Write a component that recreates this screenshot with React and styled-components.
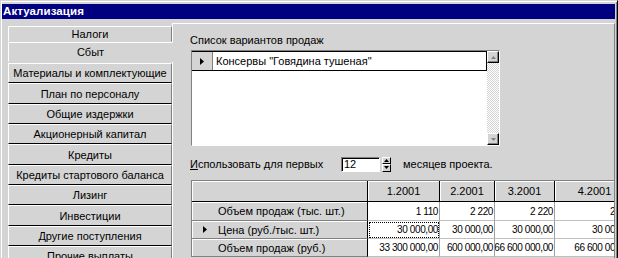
import React from 'react';
import styled, { createGlobalStyle } from 'styled-components';

const GRAY = '#d4d4d4';

const Global = createGlobalStyle`
  html, body { margin: 0; padding: 0; background: ${GRAY}; overflow: hidden; }
  body { font-family: "Liberation Sans", Arial, sans-serif; font-size: 11px; color: #000; }
`;

const Window = styled.div`
  width: 618px;
  height: 258px;
  box-sizing: border-box;
  background: ${GRAY};
  border-top: 1px solid ${GRAY};
  border-left: 1px solid ${GRAY};
  border-right: 1px solid #000;
  box-shadow: inset 1px 1px 0 #fff, inset -1px 0 0 #808080;
  padding: 3px 2px 0 1px;
  display: flex;
  flex-direction: column;
  overflow: hidden;
`;

const TitleBar = styled.div`
  height: 15px;
  background: #000080;
  color: #fff;
  font-weight: bold;
  font-size: 11.5px;
  line-height: 15px;
  padding-left: 1px;
  letter-spacing: 0.1px;
`;

const Body = styled.div`
  flex: 1;
  display: flex;
  margin-top: 4px;
  min-height: 0;
`;

const TabColumn = styled.div`
  width: 164px;
  margin-left: 6px;
  padding-top: 3px;
  display: flex;
  flex-direction: column;
  position: relative;
  z-index: 1;
`;

const Tab = styled.div`
  height: ${p => p.$h}px;
  flex: none;
  box-sizing: border-box;
  border-top: 1px solid #fff;
  border-left: 1px solid #fff;
  border-bottom: 1px solid ${p => (p.$flat ? GRAY : '#000')};
  border-right: 1px solid ${p => (p.$active ? GRAY : '#808080')};
  margin-right: ${p => (p.$active ? '-1px' : '0')};
  margin-top: ${p => p.$gap || 0}px;
  display: flex;
  align-items: center;
  justify-content: center;
  white-space: nowrap;
  background: ${GRAY};
`;

const Page = styled.div`
  flex: 1;
  box-sizing: border-box;
  border-top: 1px solid #fff;
  border-left: 1px solid #fff;
  border-right: 1px solid #808080;
  padding: 10px 0 0 18px;
  display: flex;
  flex-direction: column;
  overflow: hidden;
  min-width: 0;
`;

const Label = styled.div`
  height: 13px;
  line-height: 13px;
  margin-left: -1px;
  white-space: nowrap;
`;

const ListBox = styled.div`
  margin-top: 3px;
  width: 309px;
  height: 96px;
  box-sizing: border-box;
  background: #fff;
  border-top: 1px solid #808080;
  border-left: 1px solid #808080;
  border-bottom: 1px solid #fff;
  border-right: 1px solid #fff;
  display: flex;
`;

const ListRows = styled.div`
  flex: 1;
  display: flex;
  flex-direction: column;
`;

const ListRow = styled.div`
  height: 20px;
  box-sizing: border-box;
  border: 1px solid #000;
  border-left: none;
  display: flex;
  align-items: center;
`;

const Indicator = styled.div`
  width: 21px;
  height: 100%;
  box-sizing: border-box;
  background: ${GRAY};
  border-right: 1px solid #808080;
  display: flex;
  align-items: center;
  justify-content: center;
`;

const RowText = styled.div`
  padding-left: 3px;
  white-space: nowrap;
`;

const ScrollBar = styled.div`
  width: 12px;
  display: flex;
  flex-direction: column;
  background: repeating-conic-gradient(#fff 0 25%, ${GRAY} 0 50%) 0 0 / 2px 2px;
`;

const ScrollBtn = styled.div`
  width: 12px;
  height: 12px;
  box-sizing: border-box;
  background: ${GRAY};
  border-top: 1px solid #fff;
  border-left: 1px solid #fff;
  border-right: 1px solid #000;
  border-bottom: 1px solid #000;
  box-shadow: inset -1px -1px 0 #808080;
  display: flex;
  align-items: center;
  justify-content: center;
`;

const Track = styled.div`
  flex: 1;
`;

const SpinRow = styled.div`
  margin-top: 10px;
  height: 16px;
  display: flex;
  align-items: center;
  white-space: nowrap;
`;

const SpinLabel = styled.div`
  width: 151px;
  margin-left: -1px;
  u { text-decoration: underline; }
`;

const SpinInput = styled.div`
  width: 39px;
  height: 15px;
  box-sizing: border-box;
  background: #fff;
  border-top: 1px solid #808080;
  border-left: 1px solid #808080;
  border-right: 1px solid #fff;
  border-bottom: 1px solid #fff;
  box-shadow: inset 1px 1px 0 #000;
  padding-left: 2px;
  line-height: 13px;
`;

const Spinner = styled.div`
  margin-left: 2px;
  width: 9px;
  height: 15px;
  display: flex;
  flex-direction: column;
`;

const SpinBtn = styled.div`
  flex: 1;
  box-sizing: border-box;
  background: ${GRAY};
  border-top: 1px solid #fff;
  border-left: 1px solid #fff;
  border-right: 1px solid #000;
  border-bottom: 1px solid #000;
  display: flex;
  align-items: center;
  justify-content: center;
`;

const SpinTail = styled.div`
  margin-left: 12px;
`;

const Grid = styled.div`
  margin-top: 8px;
  display: grid;
  grid-template-columns: 176px 72px 55px 60px 80px;
  grid-template-rows: 21px 19px 18px 18px;
  border-top: 1px solid #808080;
  border-left: 1px solid #808080;
  width: max-content;
`;

const HeadCell = styled.div`
  box-sizing: border-box;
  background: ${GRAY};
  border-right: 1px solid #000;
  border-bottom: 1px solid #000;
  box-shadow: inset 1px 1px 0 #fff;
  display: flex;
  align-items: center;
  justify-content: center;
  white-space: nowrap;
`;

const RowHead = styled.div`
  box-sizing: border-box;
  background: ${GRAY};
  border-right: 1px solid #000;
  border-bottom: 1px solid #808080;
  box-shadow: inset 1px 1px 0 #fff;
  display: flex;
  align-items: center;
  white-space: nowrap;
`;

const RowMark = styled.div`
  width: 26px;
  display: flex;
  align-items: center;
  justify-content: center;
`;

const DataCell = styled.div`
  box-sizing: border-box;
  background: #fff;
  border-right: 1px solid #a0a0a0;
  border-bottom: 1px solid #c0c0c0;
  display: flex;
  align-items: center;
  justify-content: flex-end;
  padding-right: 1px;
  font-size: 10px;
  letter-spacing: -0.4px;
  white-space: nowrap;
  overflow: hidden;
  outline: ${p => (p.$focus ? '1px dotted #000' : 'none')};
  outline-offset: -2px;
`;

const Arrow = ({ dir = 'right', color = '#000', size = 4 }) => {
  if (dir === 'right') {
    return (
      <svg width={size} height={size * 2 - 1} viewBox={`0 0 ${size} ${size * 2 - 1}`}>
        <polygon points={`0,0 ${size},${size - 0.5} 0,${size * 2 - 1}`} fill={color} />
      </svg>
    );
  }
  const pts = dir === 'up' ? '0,3 2.5,0 5,3' : '0,0 2.5,3 5,0';
  return (
    <svg width="5" height="3" viewBox="0 0 5 3" style={{ overflow: 'visible' }}>
      <polygon points={pts} fill={color} />
    </svg>
  );
};

const tabs = [
  'Материалы и комплектующие',
  'План по персоналу',
  'Общие издержки',
  'Акционерный капитал',
  'Кредиты',
  'Кредиты стартового баланса',
  'Лизинг',
  'Инвестиции',
  'Другие поступления',
  'Прочие выплаты',
];
const heights = [20, 21, 20, 20, 21, 20, 20, 21, 20, 20];

const months = ['1.2001', '2.2001', '3.2001', '4.2001'];
const rows = [
  { name: 'Объем продаж (тыс. шт.)', vals: ['1 110', '2 220', '2 220', '2 220'] },
  { name: 'Цена (руб./тыс. шт.)', vals: ['30 000,00', '30 000,00', '30 000,00', '30 000,00'], current: true },
  { name: 'Объем продаж (руб.)', vals: ['33 300 000,00', '600 000,00', '66 600 000,00', '66 600 000,00'] },
];

export default function App() {
  return (
    <>
      <Global />
      <Window>
        <TitleBar>Актуализация</TitleBar>
        <Body>
          <TabColumn>
            <Tab $h={16} $flat>Налоги</Tab>
            <Tab $h={20} $active $flat>Сбыт</Tab>
            {tabs.map((t, i) => (
              <Tab key={t} $h={heights[i]} $gap={i === 0 ? 1 : 0}>{t}</Tab>
            ))}
          </TabColumn>
          <Page>
            <Label>Список вариантов продаж</Label>
            <ListBox>
              <ListRows>
                <ListRow>
                  <Indicator><Arrow /></Indicator>
                  <RowText>Консервы "Говядина тушеная"</RowText>
                </ListRow>
              </ListRows>
              <ScrollBar>
                <ScrollBtn><Arrow dir="up" color="#808080" /></ScrollBtn>
                <Track />
                <ScrollBtn><Arrow dir="down" color="#808080" /></ScrollBtn>
              </ScrollBar>
            </ListBox>
            <SpinRow>
              <SpinLabel><u>И</u>спользовать для первых</SpinLabel>
              <SpinInput>12</SpinInput>
              <Spinner>
                <SpinBtn><Arrow dir="up" color="#000" /></SpinBtn>
                <SpinBtn><Arrow dir="down" color="#000" /></SpinBtn>
              </Spinner>
              <SpinTail>месяцев проекта.</SpinTail>
            </SpinRow>
            <Grid>
              <HeadCell />
              {months.map(m => <HeadCell key={m}>{m}</HeadCell>)}
              {rows.map(r => (
                <React.Fragment key={r.name}>
                  <RowHead>
                    <RowMark>{r.current && <Arrow />}</RowMark>
                    {r.name}
                  </RowHead>
                  {r.vals.map((v, i) => (
                    <DataCell key={i} $focus={r.current && i === 0}>{v}</DataCell>
                  ))}
                </React.Fragment>
              ))}
            </Grid>
          </Page>
        </Body>
      </Window>
    </>
  );
}
